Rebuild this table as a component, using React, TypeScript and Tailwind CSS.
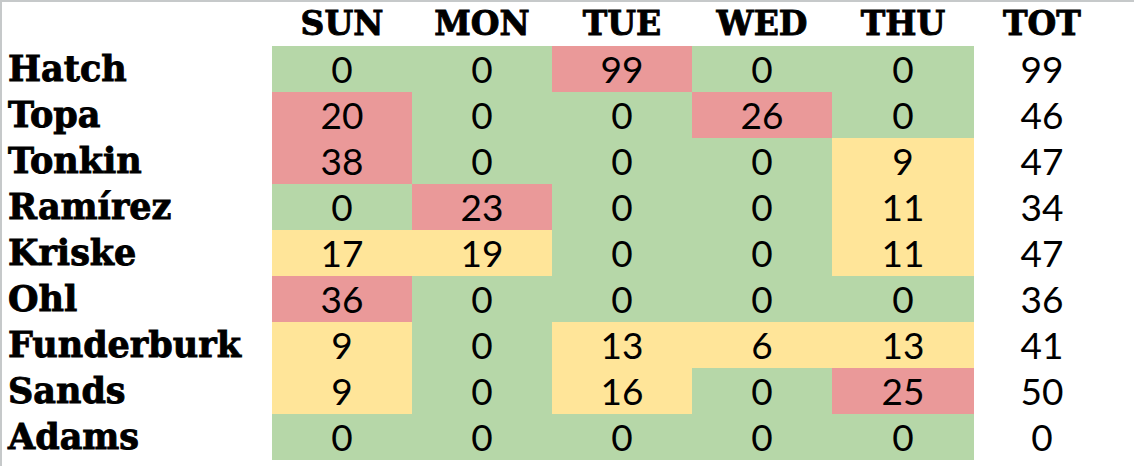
import React from "react";

type Tone = "g" | "r" | "y";

interface Row {
  name: string;
  days: [number, Tone][];
  total: number;
}

const days = ["SUN", "MON", "TUE", "WED", "THU"];

const rows: Row[] = [
  { name: "Hatch", days: [[0, "g"], [0, "g"], [99, "r"], [0, "g"], [0, "g"]], total: 99 },
  { name: "Topa", days: [[20, "r"], [0, "g"], [0, "g"], [26, "r"], [0, "g"]], total: 46 },
  { name: "Tonkin", days: [[38, "r"], [0, "g"], [0, "g"], [0, "g"], [9, "y"]], total: 47 },
  { name: "Ramírez", days: [[0, "g"], [23, "r"], [0, "g"], [0, "g"], [11, "y"]], total: 34 },
  { name: "Kriske", days: [[17, "y"], [19, "y"], [0, "g"], [0, "g"], [11, "y"]], total: 47 },
  { name: "Ohl", days: [[36, "r"], [0, "g"], [0, "g"], [0, "g"], [0, "g"]], total: 36 },
  { name: "Funderburk", days: [[9, "y"], [0, "g"], [13, "y"], [6, "y"], [13, "y"]], total: 41 },
  { name: "Sands", days: [[9, "y"], [0, "g"], [16, "y"], [0, "g"], [25, "r"]], total: 50 },
  { name: "Adams", days: [[0, "g"], [0, "g"], [0, "g"], [0, "g"], [0, "g"]], total: 0 },
];

const toneClass: Record<Tone, string> = {
  g: "bg-[#b6d7a8]",
  r: "bg-[#ea9999]",
  y: "bg-[#ffe599]",
};

// slab headings, thickened a little to get the heavy look
const slab = "font-['DejaVu_Serif',serif] font-bold text-black [-webkit-text-stroke:0.9px_black]";
const num = "font-['Lato',sans-serif] text-[37px] text-black";

export default function App() {
  return (
    <div className="w-[1134px] h-[466px] bg-white border-t-2 border-l-2 border-[#c6c9ca] overflow-hidden">
      <div className="grid grid-cols-[270px_140px_140px_140px_140px_142px_136px]">
        {/* header */}
        <div className="h-[44px]" />
        {days.map((d) => (
          <div key={d} className={`h-[44px] flex items-center justify-center text-[33px] ${slab}`}>
            {d}
          </div>
        ))}
        <div className={`h-[44px] flex items-center justify-center text-[33px] ${slab}`}>TOT</div>

        {rows.map((r) => (
          <React.Fragment key={r.name}>
            <div className={`h-[46px] flex items-center pl-[6px] text-[35px] ${slab}`}>{r.name}</div>
            {r.days.map(([v, t], i) => (
              <div key={i} className={`h-[46px] flex items-center justify-center ${toneClass[t]} ${num}`}>
                {v}
              </div>
            ))}
            <div className={`h-[46px] flex items-center justify-center ${num}`}>{r.total}</div>
          </React.Fragment>
        ))}
      </div>
    </div>
  );
}
